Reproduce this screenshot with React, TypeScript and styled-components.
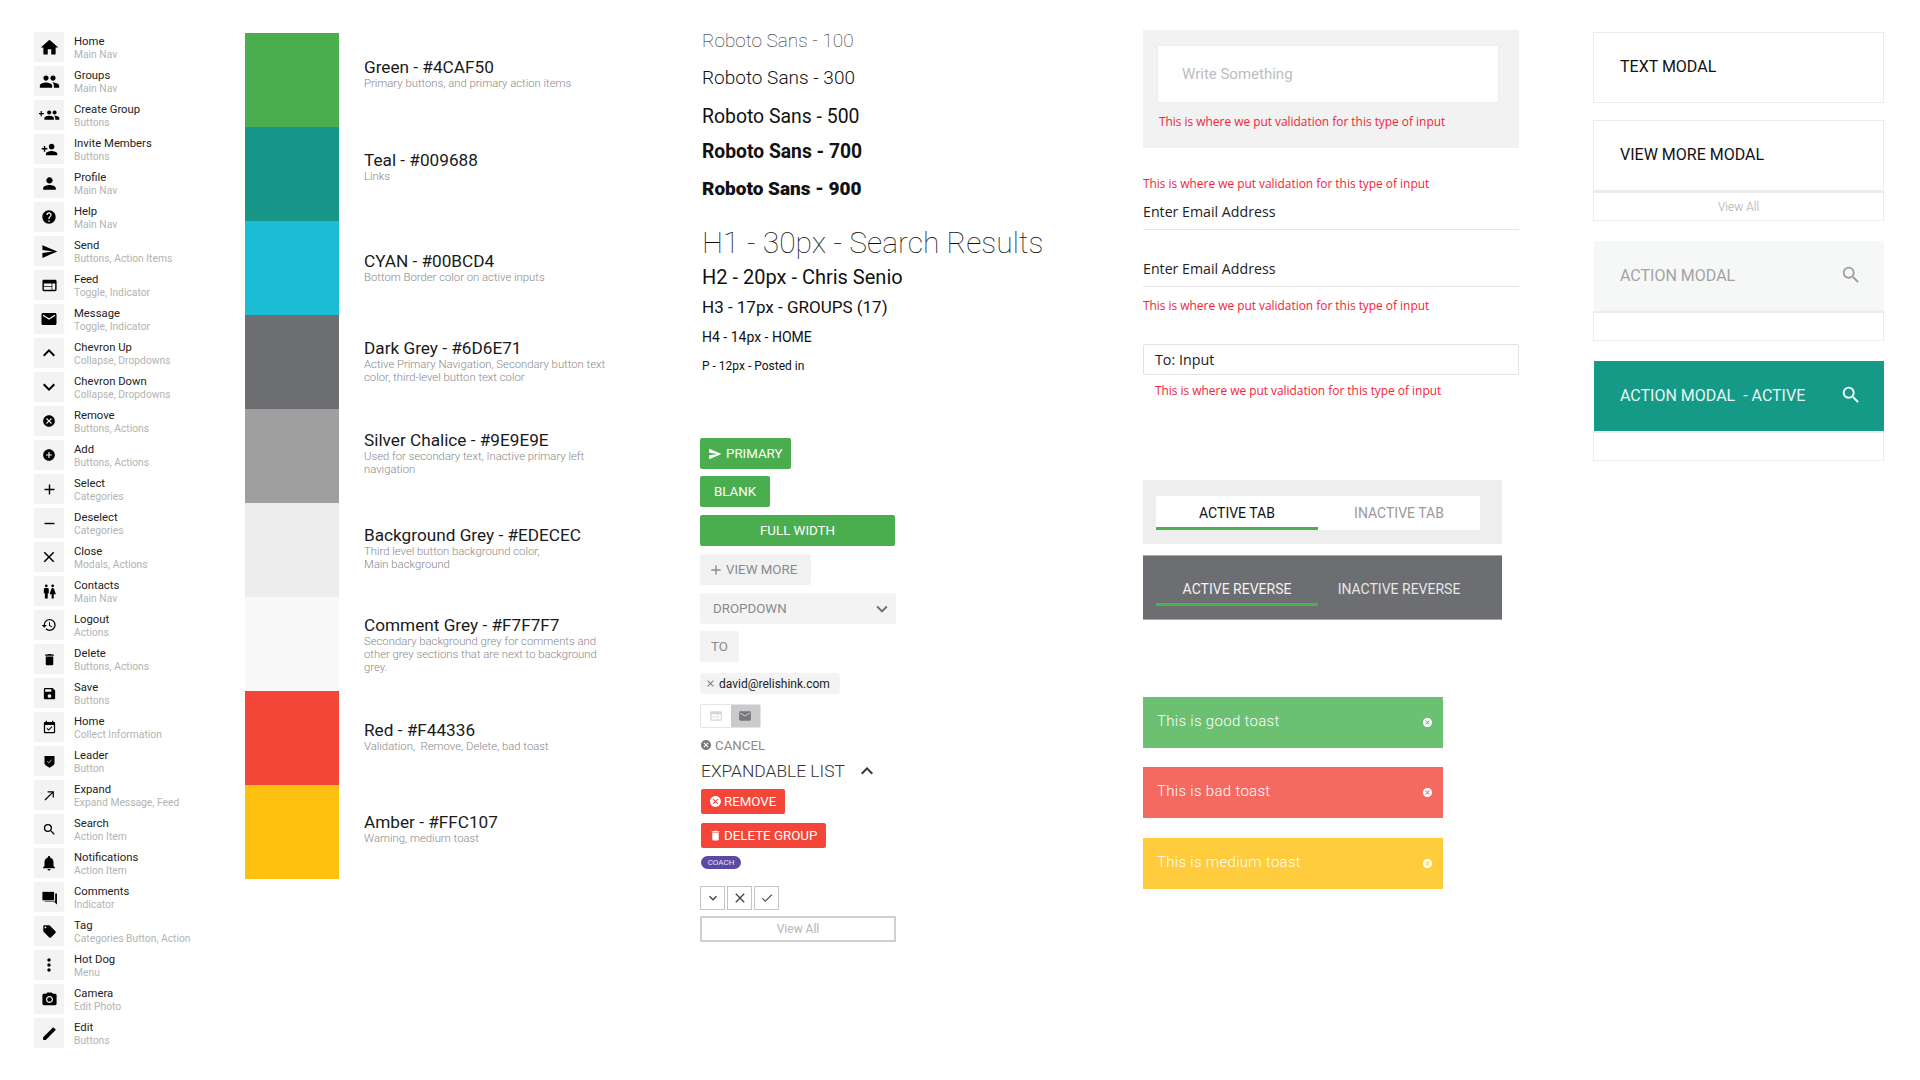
import React from "react";
import styled, { createGlobalStyle } from "styled-components";
import {
  MdHome, MdGroup, MdPersonAdd, MdPerson, MdHelp, MdSend, MdWeb, MdEmail,
  MdExpandLess, MdExpandMore, MdCancel, MdAddCircle, MdAdd, MdRemove, MdClose, MdWc,
  MdHistory, MdDelete, MdSave, MdEventAvailable, MdCallMade, MdSearch,
  MdNotifications, MdLocalOffer, MdMoreVert, MdPhotoCamera, MdCheck,
} from "react-icons/md";

const GlobalStyle = createGlobalStyle`
  html, body {
    margin: 0;
    background: #fff;
    font-family: Roboto, "Liberation Sans", sans-serif;
  }
`;

type GlyphProps = { size: number };

const GroupPlusIcon: React.FC<GlyphProps> = ({ size }) => (
  <svg width={size} height={(size * 24) / 31} viewBox="-7 0 31 24" fill="currentColor">
    <path d="M16 11c1.66 0 2.99-1.34 2.99-3S17.66 5 16 5c-1.66 0-3 1.34-3 3s1.34 3 3 3zm-8 0c1.66 0 2.99-1.34 2.99-3S9.66 5 8 5C6.34 5 5 6.34 5 8s1.34 3 3 3zm0 2c-2.33 0-7 1.17-7 3.5V19h14v-2.5c0-2.33-4.67-3.5-7-3.5zm8 0c-.29 0-.62.02-.97.05 1.16.84 1.97 1.97 1.97 3.45V19h6v-2.5c0-2.33-4.67-3.5-7-3.5z" />
    <path d="M-4.6 6h1.7v3h3v1.7h-3v3h-1.7v-3h-2.400v-1.700h2.400z" />
  </svg>
);

const ShieldIcon: React.FC<GlyphProps> = ({ size }) => (
  <svg width={size} height={size} viewBox="0 0 24 24">
    <path fill="currentColor" d="M4 3h16v12c0 2.200-4.500 5-8 7-3.500-2-8-4.800-8-7z" />
    <path fill="none" stroke="#f3f3f3" strokeWidth="1.200" d="M8.500 11.500l2.500 2.500 4.500-5" />
  </svg>
);

const ChatIcon: React.FC<GlyphProps> = ({ size }) => (
  <svg width={size} height={size} viewBox="0 0 24 24" fill="currentColor">
    <path d="M2 4h16.500v12H2z" />
    <path d="M20 6.500h2.500V22l-4-4H5v-.8h15z" />
  </svg>
);

const PencilIcon: React.FC<GlyphProps> = ({ size }) => (
  <svg width={size} height={size} viewBox="0 0 24 24" fill="currentColor">
    <path d="M3 17.250V21h3.750L21 6.750 17.250 3z" />
  </svg>
);

const icons = [
  { Icon: MdHome, size: 21, name: "Home", use: "Main Nav" },
  { Icon: MdGroup, size: 21, name: "Groups", use: "Main Nav" },
  { Icon: GroupPlusIcon, size: 21, name: "Create Group", use: "Buttons" },
  { Icon: MdPersonAdd, size: 17, name: "Invite Members", use: "Buttons" },
  { Icon: MdPerson, size: 19, name: "Profile", use: "Main Nav" },
  { Icon: MdHelp, size: 16, name: "Help", use: "Main Nav" },
  { Icon: MdSend, size: 17, name: "Send", use: "Buttons, Action Items" },
  { Icon: MdWeb, size: 17, name: "Feed", use: "Toggle, Indicator" },
  { Icon: MdEmail, size: 18, name: "Message", use: "Toggle, Indicator" },
  { Icon: MdExpandLess, size: 24, name: "Chevron Up", use: "Collapse, Dropdowns" },
  { Icon: MdExpandMore, size: 24, name: "Chevron Down", use: "Collapse, Dropdowns" },
  { Icon: MdCancel, size: 14, name: "Remove", use: "Buttons, Actions" },
  { Icon: MdAddCircle, size: 14, name: "Add", use: "Buttons, Actions" },
  { Icon: MdAdd, size: 17, name: "Select", use: "Categories" },
  { Icon: MdRemove, size: 17, name: "Deselect", use: "Categories" },
  { Icon: MdClose, size: 18, name: "Close", use: "Modals, Actions" },
  { Icon: MdWc, size: 17, name: "Contacts", use: "Main Nav" },
  { Icon: MdHistory, size: 16, name: "Logout", use: "Actions" },
  { Icon: MdDelete, size: 15, name: "Delete", use: "Buttons, Actions" },
  { Icon: MdSave, size: 15, name: "Save", use: "Buttons" },
  { Icon: MdEventAvailable, size: 15, name: "Home", use: "Collect Information" },
  { Icon: ShieldIcon, size: 15, name: "Leader", use: "Button" },
  { Icon: MdCallMade, size: 15, name: "Expand", use: "Expand Message, Feed" },
  { Icon: MdSearch, size: 15, name: "Search", use: "Action Item" },
  { Icon: MdNotifications, size: 18, name: "Notifications", use: "Action Item" },
  { Icon: ChatIcon, size: 17, name: "Comments", use: "Indicator" },
  { Icon: MdLocalOffer, size: 15, name: "Tag", use: "Categories Button, Action" },
  { Icon: MdMoreVert, size: 20, name: "Hot Dog", use: "Menu" },
  { Icon: MdPhotoCamera, size: 17, name: "Camera", use: "Edit Photo" },
  { Icon: PencilIcon, size: 17, name: "Edit", use: "Buttons" },
];

const swatches = [
  { color: "#4aae4f", title: "Green - #4CAF50", text: ["Primary buttons, and primary action items"], top: 24 },
  { color: "#159688", title: "Teal - #009688", text: ["Links"], top: 23 },
  { color: "#1abcd6", title: "CYAN - #00BCD4", text: ["Bottom Border color on active inputs"], top: 30 },
  { color: "#6d6e71", title: "Dark Grey - #6D6E71", text: ["Active Primary Navigation, Secondary button text color, third-level button text color"], top: 23 },
  { color: "#9e9f9e", title: "Silver Chalice - #9E9E9E", text: ["Used for secondary text, Inactive primary left navigation"], top: 21 },
  { color: "#ededed", title: "Background Grey - #EDECEC", text: ["Third level button background color,", "Main background"], top: 22 },
  { color: "#f8f8f9", title: "Comment Grey - #F7F7F7", text: ["Secondary background grey for comments and other grey sections that are next to background grey."], top: 18 },
  { color: "#f34538", title: "Red - #F44336", text: ["Validation,\u00a0 Remove, Delete, bad toast"], top: 29 },
  { color: "#ffc10f", title: "Amber - #FFC107", text: ["Warning, medium toast"], top: 27 },
];

const typeLines = [
  { label: "Roboto Sans - 100", size: 19, weight: 100, gap: 0 },
  { label: "Roboto Sans - 300", size: 19, weight: 300, gap: 13 },
  { label: "Roboto Sans - 500", size: 19.4, weight: 400, gap: 15 },
  { label: "Roboto Sans - 700", size: 19.3, weight: 700, gap: 11 },
  { label: "Roboto Sans - 900", size: 19, weight: 900, gap: 13 },
  { label: "H1 - 30px - Search Results", size: 30, weight: 100, gap: 30 },
  { label: "H2 - 20px - Chris Senio", size: 20, weight: 400, gap: 10 },
  { label: "H3 - 17px - GROUPS (17)", size: 17, weight: 400, gap: 6 },
  { label: "H4 - 14px - HOME", size: 14, weight: 400, gap: 6 },
  { label: "P - 12px - Posted in", size: 12, weight: 400, gap: 5 },
];

const Page = styled.div`
  display: flex;
  width: 1920px;
  height: 1080px;
  overflow: hidden;
  box-sizing: border-box;
  padding-left: 34px;
`;

const IconColumn = styled.div`
  width: 211px;
  padding-top: 32px;
  display: flex;
  flex-direction: column;
  gap: 4px;
`;

const IconRow = styled.div`
  display: flex;
  align-items: center;
  gap: 10px;
  height: 30px;
`;

const IconTile = styled.div`
  width: 30px;
  height: 30px;
  background: #f3f3f3;
  color: #000;
  display: flex;
  align-items: center;
  justify-content: center;
`;

const IconLabel = styled.div`
  padding-top: 1px;
`;

const IconName = styled.div`
  font-size: 11.300px;
  line-height: 13px;
  color: #222;
`;

const IconUse = styled.div`
  font-size: 10.300px;
  line-height: 13px;
  color: #b3b3b3;
`;

const ColorColumn = styled.div`
  width: 455px;
  padding-top: 33px;
`;

const ColorRow = styled.div`
  display: flex;
  height: 94px;
`;

const Swatch = styled.div<{ $color: string }>`
  width: 94px;
  height: 94px;
  background: ${(p) => p.$color};
`;

const ColorInfo = styled.div<{ $top: number }>`
  margin-left: 25px;
  width: 250px;
  padding-top: ${(p) => p.$top}px;
`;

const ColorTitle = styled.div`
  font-size: 17.200px;
  line-height: 20px;
  color: #1a1a1a;
`;

const ColorText = styled.div`
  font-size: 11.300px;
  font-weight: 300;
  line-height: 13px;
  color: #888;
`;

const ControlColumn = styled.div`
  width: 443px;
  padding-top: 29px;
  display: flex;
  flex-direction: column;
  align-items: flex-start;
`;

const TypeLine = styled.div<{ $size: number; $weight: number; $gap: number }>`
  margin: ${(p) => p.$gap}px 0 0 2px;
  font-size: ${(p) => p.$size}px;
  font-weight: ${(p) => p.$weight};
  line-height: 24px;
  color: #111;
  white-space: nowrap;
`;

const Button = styled.div<{ $bg?: string; $fg?: string; $w?: number; $mt: number; $gap?: number; $center?: boolean }>`
  margin-top: ${(p) => p.$mt}px;
  ${(p) => (p.$w ? `width: ${p.$w}px;` : "")}
  height: 31px;
  box-sizing: border-box;
  padding: 0 8px;
  border-radius: 2px;
  background: ${(p) => p.$bg ?? "#4aae4f"};
  color: ${(p) => p.$fg ?? "#fff"};
  font-size: 13.300px;
  display: flex;
  align-items: center;
  justify-content: ${(p) => (p.$center ? "center" : "flex-start")};
  gap: ${(p) => p.$gap ?? 4}px;
  white-space: nowrap;
`;

const DropdownButton = styled(Button)`
  justify-content: space-between;
  padding: 0 3px 0 13px;
  color: #8a8a8a;
`;

const Chip = styled.div`
  margin-top: 11px;
  height: 21px;
  width: 140px;
  box-sizing: border-box;
  padding-left: 5px;
  border-radius: 4px;
  background: #f3f3f3;
  color: #222;
  font-size: 12px;
  display: flex;
  align-items: center;
  gap: 3px;
`;

const Toggle = styled.div`
  margin-top: 10px;
  display: flex;
  width: 61px;
  height: 24px;
  box-sizing: border-box;
  border: 1px solid #e4e4e4;
  border-radius: 2px;
  overflow: hidden;
`;

const ToggleSide = styled.div<{ $active?: boolean }>`
  flex: 1;
  display: flex;
  align-items: center;
  justify-content: center;
  background: ${(p) => (p.$active ? "#c9cacb" : "#fff")};
  color: ${(p) => (p.$active ? "#77787b" : "#d5d5d5")};
`;

const CancelLink = styled.div`
  margin-top: 9px;
  height: 16px;
  display: flex;
  align-items: center;
  gap: 3px;
  font-size: 13.300px;
  color: #8a8a8a;
  svg {
    color: #7a7a7a;
  }
`;

const ExpandTitle = styled.div`
  margin: 6px 0 0 1px;
  height: 24px;
  display: flex;
  align-items: center;
  gap: 10px;
  font-size: 17.400px;
  font-weight: 300;
  color: #333;
`;

const RedButton = styled.div<{ $mt: number }>`
  margin: ${(p) => p.$mt}px 0 0 1px;
  height: 25px;
  box-sizing: border-box;
  padding: 0 9px 0 8px;
  border-radius: 2px;
  background: #f34538;
  color: #fff;
  font-size: 13.300px;
  display: flex;
  align-items: center;
  gap: 2px;
`;

const CoachPill = styled.div`
  margin: 8px 0 0 1px;
  width: 40px;
  height: 13px;
  border-radius: 7px;
  background: #5c48a5;
  color: #e6e2f3;
  font-size: 8px;
  display: flex;
  align-items: center;
  justify-content: center;
`;

const SmallRow = styled.div`
  margin: 17px 0 0;
  display: flex;
  gap: 2px;
`;

const SmallBox = styled.div`
  width: 25px;
  height: 24px;
  box-sizing: border-box;
  border: 1px solid #c4c4c4;
  color: #444;
  display: flex;
  align-items: center;
  justify-content: center;
`;

const ViewAllBox = styled.div`
  margin-top: 6px;
  width: 196px;
  height: 26px;
  box-sizing: border-box;
  border: 2px solid #d0d0d0;
  color: #b5b5b5;
  font-size: 12px;
  display: flex;
  align-items: center;
  justify-content: center;
`;

const FormColumn = styled.div`
  width: 376px;
  margin-right: 74px;
  padding-top: 30px;
  display: flex;
  flex-direction: column;
  align-items: flex-start;
  font-family: "Open Sans", sans-serif;
`;

const InputPanel = styled.div`
  width: 100%;
  height: 118px;
  box-sizing: border-box;
  padding: 15px 20px 0 14px;
  background: #f2f2f2;
`;

const BigInput = styled.div`
  height: 58px;
  box-sizing: border-box;
  padding-left: 24px;
  background: #fff;
  border: 1px solid #ececec;
  color: #bdbdbd;
  font-family: Roboto, sans-serif;
  font-size: 15px;
  display: flex;
  align-items: center;
`;

const ErrorText = styled.div<{ $mt: number; $ml?: number }>`
  margin: ${(p) => p.$mt}px 0 0 ${(p) => p.$ml ?? 0}px;
  height: 16px;
  line-height: 16px;
  font-size: 11.900px;
  font-weight: 500;
  color: #f2243a;
  white-space: nowrap;
`;

const LineField = styled.div<{ $mt: number }>`
  margin-top: ${(p) => p.$mt}px;
  width: 100%;
  height: 38px;
  box-sizing: border-box;
  padding-top: 8px;
  line-height: 24px;
  border-bottom: 1px solid #e6e6e6;
  font-size: 14.200px;
  color: #222;
`;

const BoxField = styled.div`
  margin-top: 31px;
  width: 100%;
  height: 31px;
  box-sizing: border-box;
  padding: 0 0 1px 11px;
  border: 1px solid #e2e2e2;
  border-radius: 2px;
  font-size: 14.300px;
  color: #222;
  display: flex;
  align-items: center;
`;

const TabPanel = styled.div<{ $dark?: boolean; $mt: number }>`
  margin-top: ${(p) => p.$mt}px;
  width: 359px;
  height: ${(p) => (p.$dark ? 65 : 64)}px;
  box-sizing: border-box;
  padding: 16px 22px 14px 13px;
  background: ${(p) => (p.$dark ? "#6d6e71" : "#eeeeee")};
  ${(p) => (p.$dark ? "border-top: 1px solid #a8a8a8; border-bottom: 1px solid #a8a8a8;" : "")}
  font-family: Roboto, sans-serif;
`;

const TabBar = styled.div<{ $dark?: boolean }>`
  height: 34px;
  display: flex;
  background: ${(p) => (p.$dark ? "transparent" : "#fff")};
`;

const Tab = styled.div<{ $active?: boolean; $color: string }>`
  width: 162px;
  box-sizing: border-box;
  padding-top: 2px;
  border-bottom: 3px solid ${(p) => (p.$active ? "#4caf50" : "transparent")};
  color: ${(p) => p.$color};
  font-size: 14px;
  display: flex;
  align-items: center;
  justify-content: center;
`;

const Toast = styled.div<{ $bg: string; $mt: number }>`
  margin-top: ${(p) => p.$mt}px;
  width: 300px;
  height: 51px;
  box-sizing: border-box;
  padding: 0 10px 4px 14px;
  background: ${(p) => p.$bg};
  color: #fff;
  font-family: Roboto, sans-serif;
  font-size: 15px;
  font-weight: 300;
  letter-spacing: 0.300px;
  display: flex;
  align-items: center;
  justify-content: space-between;
  svg {
    margin-top: 4px;
  }
`;

const ModalColumn = styled.div`
  width: 291px;
  padding-top: 32px;
  display: flex;
  flex-direction: column;
`;

const Modal = styled.div<{ $mt?: number }>`
  margin-top: ${(p) => p.$mt ?? 0}px;
  display: flex;
  flex-direction: column;
`;

const ModalHead = styled.div<{ $bg?: string; $fg?: string; $plain?: boolean; $tall?: boolean }>`
  height: ${(p) => (p.$tall ? 71 : 70)}px;
  box-sizing: border-box;
  margin-left: ${(p) => (p.$plain ? 0 : 1)}px;
  padding: 0 22px ${(p) => (p.$tall ? 3 : 2)}px 26px;
  background: ${(p) => p.$bg ?? "#fff"};
  color: ${(p) => p.$fg ?? "#111"};
  border: ${(p) => (p.$plain ? "1px solid #ececec" : "none")};
  font-size: 16px;
  display: flex;
  align-items: center;
  justify-content: space-between;
`;

const ModalFoot = styled.div`
  height: 30px;
  box-sizing: border-box;
  border: 1px solid #ececec;
  border-top-width: 2px;
  color: #a8a8a8;
  font-size: 12px;
  font-weight: 300;
  display: flex;
  align-items: center;
  justify-content: center;
`;

const App: React.FC = () => {
  return (
    <>
      <GlobalStyle />
      <Page>
        <IconColumn>
          {icons.map(({ Icon, size, name, use }, i) => (
            <IconRow key={i}>
              <IconTile>
                <Icon size={size} />
              </IconTile>
              <IconLabel>
                <IconName>{name}</IconName>
                <IconUse>{use}</IconUse>
              </IconLabel>
            </IconRow>
          ))}
        </IconColumn>

        <ColorColumn>
          {swatches.map((s) => (
            <ColorRow key={s.title}>
              <Swatch $color={s.color} />
              <ColorInfo $top={s.top}>
                <ColorTitle>{s.title}</ColorTitle>
                {s.text.map((t) => (
                  <ColorText key={t}>{t}</ColorText>
                ))}
              </ColorInfo>
            </ColorRow>
          ))}
        </ColorColumn>

        <ControlColumn>
          {typeLines.map((t) => (
            <TypeLine key={t.label} $size={t.size} $weight={t.weight} $gap={t.gap}>
              {t.label}
            </TypeLine>
          ))}
          <Button $mt={60} $w={91}>
            <MdSend size={14} /> PRIMARY
          </Button>
          <Button $mt={7} $w={70} $center>BLANK</Button>
          <Button $mt={8} $w={195} $center>FULL WIDTH</Button>
          <Button $mt={8} $w={111} $bg="#f1f1f1" $fg="#8a8a8a" $gap={2}>
            <MdAdd size={16} /> VIEW MORE
          </Button>
          <DropdownButton $mt={8} $w={196} $bg="#f3f3f3">
            DROPDOWN <MdExpandMore size={22} color="#6d6e71" />
          </DropdownButton>
          <Button $mt={7} $w={39} $bg="#f3f3f3" $fg="#8a8a8a" $center>TO</Button>
          <Chip>
            <MdClose size={11} color="#777" /> david@relishink.com
          </Chip>
          <Toggle>
            <ToggleSide><MdWeb size={14} /></ToggleSide>
            <ToggleSide $active><MdEmail size={14} /></ToggleSide>
          </Toggle>
          <CancelLink>
            <MdCancel size={12} /> CANCEL
          </CancelLink>
          <ExpandTitle>
            EXPANDABLE LIST <MdExpandLess size={24} />
          </ExpandTitle>
          <RedButton $mt={6}>
            <MdCancel size={13} /> REMOVE
          </RedButton>
          <RedButton $mt={9}>
            <MdDelete size={13} /> DELETE GROUP
          </RedButton>
          <CoachPill>COACH</CoachPill>
          <SmallRow>
            <SmallBox><MdExpandMore size={16} /></SmallBox>
            <SmallBox><MdClose size={16} /></SmallBox>
            <SmallBox><MdCheck size={14} /></SmallBox>
          </SmallRow>
          <ViewAllBox>View All</ViewAllBox>
        </ControlColumn>

        <FormColumn>
          <InputPanel>
            <BigInput>Write Something</BigInput>
            <ErrorText $mt={10} $ml={2}>This is where we put validation for this type of input</ErrorText>
          </InputPanel>
          <ErrorText $mt={27}>This is where we put validation for this type of input</ErrorText>
          <LineField $mt={1}>Enter Email Address</LineField>
          <LineField $mt={19}>Enter Email Address</LineField>
          <ErrorText $mt={10}>This is where we put validation for this type of input</ErrorText>
          <BoxField>To: Input</BoxField>
          <ErrorText $mt={7} $ml={12}>This is where we put validation for this type of input</ErrorText>
          <TabPanel $mt={82}>
            <TabBar>
              <Tab $active $color="#111">ACTIVE TAB</Tab>
              <Tab $color="#9a9a9a">INACTIVE TAB</Tab>
            </TabBar>
          </TabPanel>
          <TabPanel $dark $mt={11}>
            <TabBar $dark>
              <Tab $active $color="#f2f2f2">ACTIVE REVERSE</Tab>
              <Tab $color="#e6e6e6">INACTIVE REVERSE</Tab>
            </TabBar>
          </TabPanel>
          <Toast $mt={77} $bg="#6cc072">
            This is good toast <MdCancel size={11} />
          </Toast>
          <Toast $mt={19} $bg="#f46a60">
            This is bad toast <MdCancel size={11} />
          </Toast>
          <Toast $mt={20} $bg="#ffcc3d">
            This is medium toast <MdCancel size={11} />
          </Toast>
        </FormColumn>

        <ModalColumn>
          <Modal>
            <ModalHead $plain $tall>TEXT MODAL</ModalHead>
          </Modal>
          <Modal $mt={17}>
            <ModalHead $plain $tall>VIEW MORE MODAL</ModalHead>
            <ModalFoot>View All</ModalFoot>
          </Modal>
          <Modal $mt={20}>
            <ModalHead $bg="#f6f7f7" $fg="#a3a3a3">
              ACTION MODAL <MdSearch size={22} color="#9e9e9e" />
            </ModalHead>
            <ModalFoot />
          </Modal>
          <Modal $mt={20}>
            <ModalHead $bg="#159a88" $fg="#e9f6f3">
              ACTION MODAL &nbsp;- ACTIVE <MdSearch size={22} color="#fff" />
            </ModalHead>
            <ModalFoot />
          </Modal>
        </ModalColumn>
      </Page>
    </>
  );
};

export default App;
